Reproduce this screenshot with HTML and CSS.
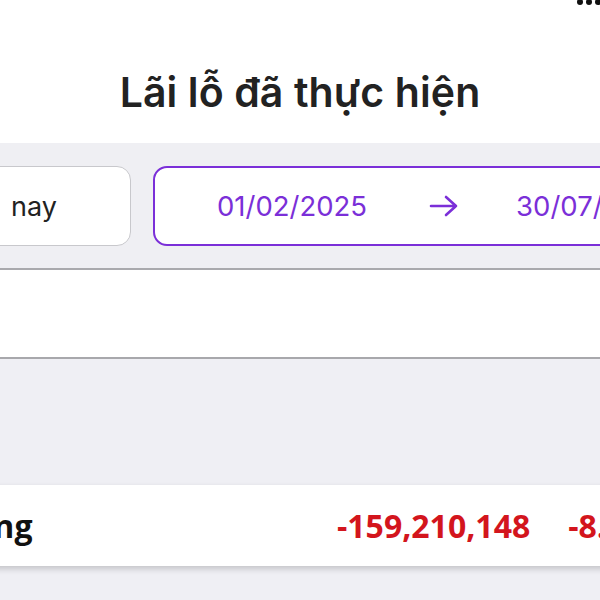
FILE: index.html
```html
<!DOCTYPE html>
<html lang="vi">
<head>
    <meta charset="UTF-8">
    <meta name="viewport" content="width=device-width, initial-scale=1.0">
    <title>Lãi lỗ đã thực hiện</title>
    <link rel="stylesheet" href="styles.css">
</head>
<body>
<div id="page">
    <div id="statusbar">
        <span class="dot"></span><span class="dot"></span><span class="dot"></span>
    </div>

    <div id="header">
        <h1 class="title">Lãi lỗ đã thực hiện</h1>
    </div>

    <div id="filters">
        <div class="chip">Hôm nay</div>
        <div class="range">
            <span class="range_date">01/02/2025</span>
            <span class="range_arrow">
                <svg width="30" height="24" viewBox="0 0 30 24" fill="none" stroke="currentColor" stroke-width="2.6" stroke-linecap="round" stroke-linejoin="round">
                    <path d="M2 12h25M17 3l10 9-10 9"/>
                </svg>
            </span>
            <span class="range_date">30/07/2025</span>
        </div>
    </div>

    <div id="summary"></div>

    <div id="list">
        <div class="list_gap"></div>
        <div class="row">
            <span class="row_name">Tổng</span>
            <span class="row_value">-159,210,148</span>
            <span class="row_percent">-8.52%</span>
        </div>
    </div>
</div>
</body>
</html>
```

FILE: styles.css
```css
body {
    margin: 0;
    background-color: #efeff4;
    font-family: "Inter", "Noto Sans", sans-serif;
    color: #222;
    overflow: hidden;
}

#page {
    width: 600px;
    height: 600px;
    overflow: hidden;
}

#statusbar {
    height: 6px;
    display: flex;
    justify-content: flex-end;
    gap: 3px;
    background-color: white;
    overflow: hidden;
}

.dot {
    width: 6px;
    height: 6px;
    margin-top: -1px;
    border-radius: 50%;
    background-color: #111;
}

.dot:last-child {
    margin-right: -1px;
}

#header {
    height: 137px;
    background-color: white;
    display: flex;
    justify-content: center;
}

.title {
    margin: 0;
    padding-top: 61px;
    font-size: 41px;
    font-weight: 600;
    letter-spacing: 0.1px;
    color: #222;
}

#filters {
    height: 127px;
    box-sizing: border-box;
    padding-top: 23px;
    display: flex;
    gap: 22px;
    margin-left: -160px;
    width: 900px;
    background-color: #efeff3;
    border-bottom: 2px solid #a9a9ad;
}

.chip {
    width: 291px;
    height: 80px;
    box-sizing: border-box;
    display: flex;
    align-items: center;
    justify-content: flex-end;
    padding-right: 73px;
    background-color: white;
    border: 1.5px solid #c8c8cc;
    border-radius: 14px;
    font-size: 27px;
    word-spacing: 16px;
    color: #222;
}

.range {
    width: 520px;
    height: 80px;
    box-sizing: border-box;
    display: flex;
    align-items: center;
    padding-left: 62px;
    background-color: white;
    border: 2px solid #7b2fd8;
    border-radius: 14px;
    font-size: 27.5px;
    color: #7b2fd8;
}

.range_arrow {
    display: flex;
    margin-left: 62px;
    margin-right: 57px;
    color: #7b2fd8;
}

#summary {
    height: 87px;
    background-color: white;
    border-bottom: 2px solid #a8a8ac;
}

#list {
    background-color: #efeff4;
}

.list_gap {
    height: 126px;
}

.row {
    height: 81px;
    margin-left: -45px;
    width: 760px;
    display: flex;
    align-items: center;
    background-color: white;
    box-shadow: 0 3px 6px rgba(0, 0, 0, 0.18);
    font-family: "Open Sans", sans-serif;
    font-weight: 700;
    font-size: 32px;
}

.row_name {
    width: 382px;
    color: #111;
}

.row_value {
    color: #d3151d;
}

.row_percent {
    margin-left: 38px;
    color: #d3151d;
}
```
